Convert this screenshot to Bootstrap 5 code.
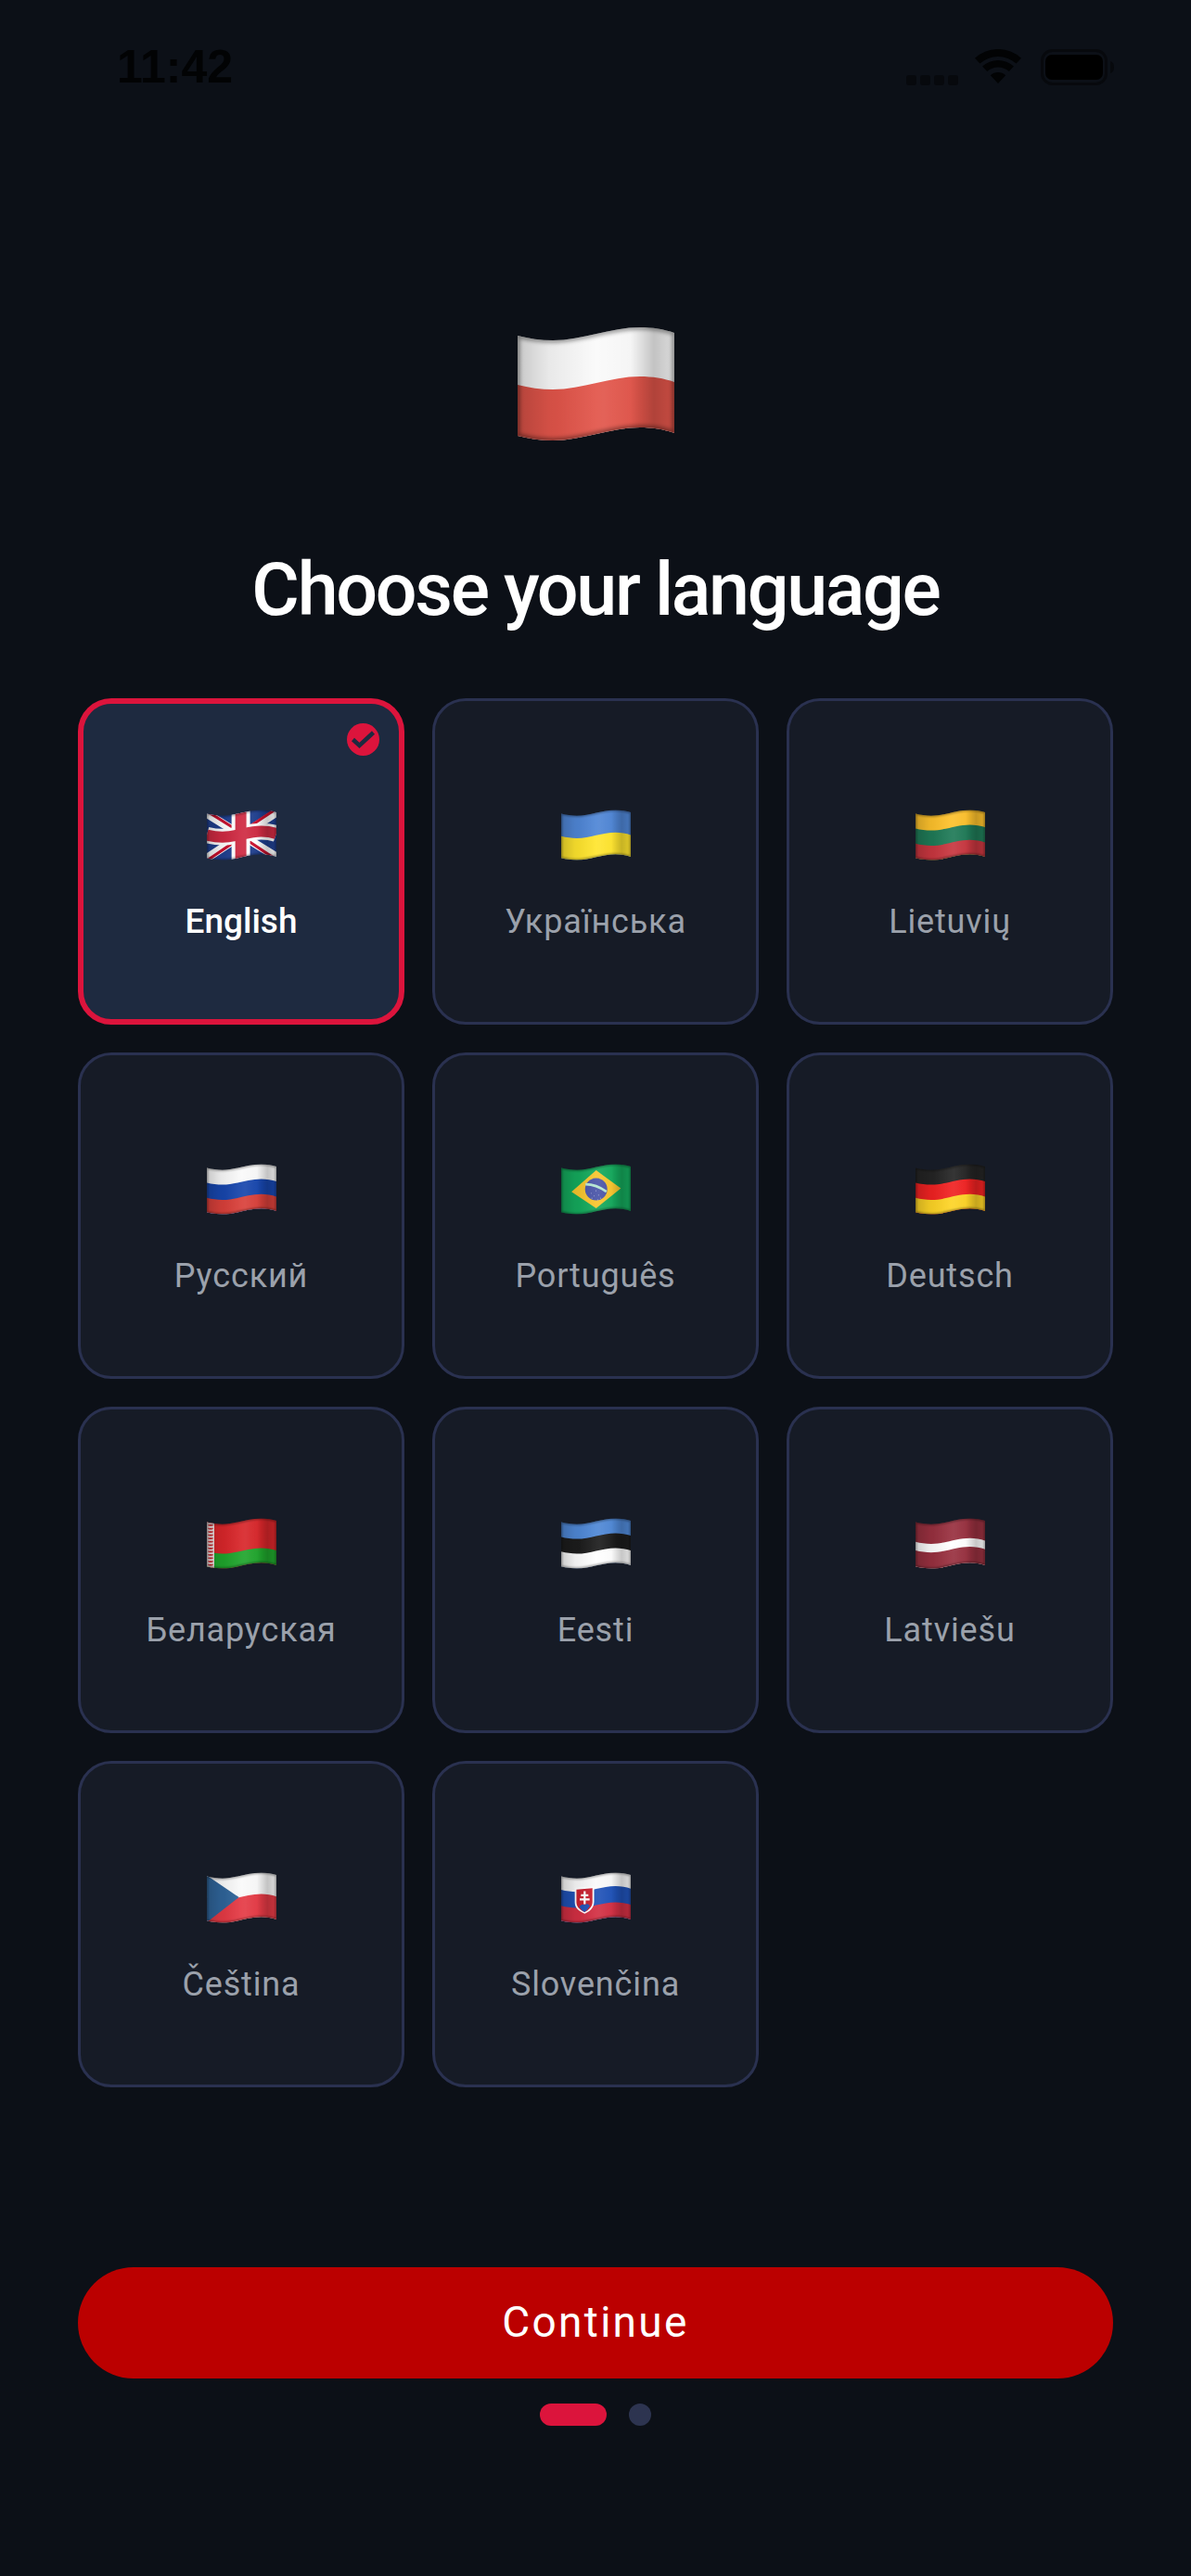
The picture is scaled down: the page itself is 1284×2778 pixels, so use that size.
<!DOCTYPE html>
<html lang="en">
<head>
  <meta charset="UTF-8" />
  <meta name="viewport" content="width=device-width, initial-scale=1" />
  <title>Choose your language</title>
  <link href="https://cdn.jsdelivr.net/npm/bootstrap@5.3.3/dist/css/bootstrap.min.css" rel="stylesheet" />
  <style>
    body { background: #0c1017; font-family: Roboto, "Liberation Sans", sans-serif; }
    .svg-defs { display: block; width: 0; height: 0; }
    .screen { min-height: 2778px; padding: 0 84px; }

    .status-row { height: 92px; padding-top: 53px; margin: 0 -2px 0 42px; }
    .clock { font: 700 50px/39px "Liberation Sans", sans-serif; color: #020304; }
    .sig-bar { width: 11px; height: 11px; background: #07090d; border-radius: 3px; }
    .wifi-ico { width: 50px; height: 37px; margin-left: 18px; }
    .batt-ico { width: 80px; height: 39px; margin-left: 21px; }

    .flag-big { width: 169px; height: 124px; margin-top: 260px; }
    .page-title { font-size: 79px; font-weight: 500; letter-spacing: -2.3px; line-height: 90px; color: #fff; margin: 115px 0 0; }

    .lang-grid { display: grid; grid-template-columns: repeat(3, 352px); gap: 30px; margin-top: 72px; }
    .lang-tile { height: 352px; background: #161b26; border: 3px solid #2a3150; border-radius: 36px; padding-top: 117px; }
    .lang-tile.picked { background: #1e2a40; border: 6px solid #dc143c; padding-top: 114px; }
    .flag-sm { width: 75px; height: 55px; }
    .lang-name { font-size: 36px; line-height: 44px; letter-spacing: .85px; color: #9ba1ab; margin-top: 44px; }
    .picked .lang-name { color: #fff; font-size: 37px; font-weight: 500; letter-spacing: 0; }
    .tick-badge { top: 21px; right: 21px; width: 35px; height: 35px; }

    .go-btn { height: 120px; margin-top: 194px; padding-bottom: 8px; background: #bb0000; color: #fff; font-size: 46px; letter-spacing: 2.3px; border: 0; }
    .go-btn:hover { background: #bb0000; color: #fff; }
    .pager { margin-top: 27px; gap: 24px; }
    .pager-on { width: 72px; height: 24px; background: #dc143c; }
    .pager-off { width: 24px; height: 24px; background: #2d3450; }
  </style>
</head>
<body>
  <!-- flags -->
  <svg class="svg-defs" aria-hidden="true">
    <defs>
      <clipPath id="wave-clip"><path d="M0 10C12 13 25 15 38 15C70 15 100 1 132 1C145 1 158 3 169 7V115C158 111 145 109 132 109C100 109 70 123 38 123C25 123 12 121 0 118Z" /></clipPath>
      <path id="wv" d="M0 10C12 13 25 15 38 15C70 15 100 1 132 1C145 1 158 3 169 7V150H0Z" />
      <linearGradient id="sheen-dark">
        <stop offset="0" stop-color="#000" stop-opacity=".2" />
        <stop offset=".2" stop-color="#000" stop-opacity=".07" />
        <stop offset=".5" stop-color="#000" stop-opacity="0" />
        <stop offset=".72" stop-color="#000" stop-opacity=".02" />
        <stop offset=".87" stop-color="#000" stop-opacity=".22" />
        <stop offset="1" stop-color="#000" stop-opacity=".12" />
      </linearGradient>
      <linearGradient id="sheen-light">
        <stop offset=".25" stop-color="#fff" stop-opacity="0" />
        <stop offset=".55" stop-color="#fff" stop-opacity=".08" />
        <stop offset=".8" stop-color="#fff" stop-opacity="0" />
      </linearGradient>
      <filter id="soft" x="-10%" y="-10%" width="120%" height="120%"><feGaussianBlur stdDeviation="2" /></filter>
      <g id="shade">
        <rect width="169" height="124" fill="url(#sheen-light)" />
        <rect width="169" height="124" fill="url(#sheen-dark)" />
        <path d="M0 10C12 13 25 15 38 15C70 15 100 1 132 1C145 1 158 3 169 7V115C158 111 145 109 132 109C100 109 70 123 38 123C25 123 12 121 0 118Z" fill="none" stroke="#000" stroke-opacity=".4" stroke-width="5" filter="url(#soft)" />
      </g>

      <symbol id="fl-pl" viewBox="0 0 169 124"><g clip-path="url(#wave-clip)">
        <rect width="169" height="124" fill="#fafafa" /><use href="#wv" y="53" fill="#e2554a" /><use href="#shade" />
      </g></symbol>

      <symbol id="fl-gb" viewBox="0 0 169 124"><g clip-path="url(#wave-clip)">
        <rect width="169" height="124" fill="#1f3f8f" />
        <path d="M0 10L169 115M169 7L0 118" stroke="#fff" stroke-width="20" fill="none" />
        <path d="M0 4L70 48M169 -2L100 44M0 124L68 78M169 122L100 76" stroke="#c8102e" stroke-width="7" fill="none" />
        <rect x="60" width="45" height="124" fill="#fff" />
        <path d="M0 62C12 65 25 67 38 67C70 67 100 53 132 53C145 53 158 55 169 59" fill="none" stroke="#fff" stroke-width="40" />
        <rect x="69" width="27" height="124" fill="#cf2a42" />
        <path d="M0 62C12 65 25 67 38 67C70 67 100 53 132 53C145 53 158 55 169 59" fill="none" stroke="#cf2a42" stroke-width="27" />
        <use href="#shade" />
      </g></symbol>

      <symbol id="fl-ua" viewBox="0 0 169 124"><g clip-path="url(#wave-clip)">
        <rect width="169" height="124" fill="#4f86d6" /><use href="#wv" y="55" fill="#ffe52e" /><use href="#shade" />
      </g></symbol>

      <symbol id="fl-lt" viewBox="0 0 169 124"><g clip-path="url(#wave-clip)">
        <rect width="169" height="124" fill="#fdc12c" /><use href="#wv" y="36" fill="#1f7a57" /><use href="#wv" y="73" fill="#c8363f" /><use href="#shade" />
      </g></symbol>

      <symbol id="fl-ru" viewBox="0 0 169 124"><g clip-path="url(#wave-clip)">
        <rect width="169" height="124" fill="#fafafa" /><use href="#wv" y="36" fill="#1746ad" /><use href="#wv" y="73" fill="#d9403a" /><use href="#shade" />
      </g></symbol>

      <symbol id="fl-br" viewBox="0 0 169 124"><g clip-path="url(#wave-clip)">
        <rect width="169" height="124" fill="#14a95c" />
        <path d="M85 16L145 60L85 108L25 68Z" fill="#f7c52e" />
        <circle cx="85" cy="62" r="27" fill="#4a55a8" />
        <path d="M59 50Q85 50 110 68" stroke="#b4e6d2" stroke-width="6" fill="none" />
        <path d="M72 72h1M80 78h1M90 76h1M96 84h1M84 66h1M74 84h1M88 88h1" stroke="#c7ccec" stroke-width="3" fill="none" />
        <use href="#shade" />
      </g></symbol>

      <symbol id="fl-de" viewBox="0 0 169 124"><g clip-path="url(#wave-clip)">
        <rect width="169" height="124" fill="#242424" /><use href="#wv" y="36" fill="#f02222" /><use href="#wv" y="73" fill="#fdd426" /><use href="#shade" />
      </g></symbol>

      <symbol id="fl-by" viewBox="0 0 169 124"><g clip-path="url(#wave-clip)">
        <rect width="169" height="124" fill="#d8262a" /><use href="#wv" y="72" fill="#1fa52c" />
        <rect width="18" height="124" fill="#f3e6e6" />
        <path d="M9 8V124" stroke="#c9252b" stroke-width="8" stroke-dasharray="4 4" />
        <path d="M4 8V124M14 8V124" stroke="#c9252b" stroke-width="2" stroke-dasharray="3 5" />
        <use href="#shade" />
      </g></symbol>

      <symbol id="fl-ee" viewBox="0 0 169 124"><g clip-path="url(#wave-clip)">
        <rect width="169" height="124" fill="#4f88d6" /><use href="#wv" y="36" fill="#1c1c1c" /><use href="#wv" y="72" fill="#fff" /><use href="#shade" />
      </g></symbol>

      <symbol id="fl-lv" viewBox="0 0 169 124"><g clip-path="url(#wave-clip)">
        <rect width="169" height="124" fill="#98303f" /><use href="#wv" y="48" fill="#fff" /><use href="#wv" y="69" fill="#98303f" /><use href="#shade" />
      </g></symbol>

      <symbol id="fl-cz" viewBox="0 0 169 124"><g clip-path="url(#wave-clip)">
        <rect width="169" height="124" fill="#fafafa" /><use href="#wv" y="52" fill="#e53a45" />
        <path d="M0 8L78 61L0 122Z" fill="#2f6499" /><use href="#shade" />
      </g></symbol>

      <symbol id="fl-sk" viewBox="0 0 169 124"><g clip-path="url(#wave-clip)">
        <rect width="169" height="124" fill="#fafafa" /><use href="#wv" y="33" fill="#1f52b8" /><use href="#wv" y="72" fill="#d32f43" />
        <path d="M33 38L80 35V72C80 88 66 97 57 101C48 97 33 90 33 74Z" fill="#fff" />
        <path d="M37 42L76 39V72C76 85 65 93 57 97C49 93 37 86 37 73Z" fill="#c9202f" />
        <path d="M44 84Q50 75 57 80Q64 74 70 82Q64 92 57 97Q49 93 44 84Z" fill="#1f52b8" />
        <path d="M57 46V78M48 56H66M45 66H69" stroke="#fff" stroke-width="5" fill="none" />
        <use href="#shade" />
      </g></symbol>
    </defs>
  </svg>

  <div class="screen d-flex flex-column">
    <div class="status-row d-flex align-items-start">
      <span class="clock">11:42</span>
      <div class="d-flex gap-1 ms-auto align-self-end">
        <span class="sig-bar"></span><span class="sig-bar"></span><span class="sig-bar"></span><span class="sig-bar"></span>
      </div>
      <svg class="wifi-ico" viewBox="0 0 50 37" fill="#020304">
        <path d="M0 9.7A37 37 0 0 1 50 9.7L44.6 15.6A29 29 0 0 0 5.4 15.6Z" />
        <path d="M8.1 18.6A25 25 0 0 1 41.9 18.6L36.8 24.1A17.5 17.5 0 0 0 13.2 24.1Z" />
        <path d="M16.9 28.2A12 12 0 0 1 33.1 28.2L25 37Z" />
      </svg>
      <svg class="batt-ico" viewBox="0 0 80 39">
        <rect x="1.5" y="1.5" width="69" height="36" rx="11" fill="none" stroke="#07090d" stroke-width="3" />
        <rect x="5" y="6" width="62" height="27" rx="7" fill="#000" />
        <path d="M75 13C78 14 79 16 79 19.5S78 25 75 26Z" fill="#07090d" />
      </svg>
    </div>

    <svg class="flag-big align-self-center"><use href="#fl-pl" /></svg>
    <h1 class="page-title text-center">Choose your language</h1>

    <div class="lang-grid">
      <div class="lang-tile picked position-relative d-flex flex-column align-items-center">
        <svg class="tick-badge position-absolute" viewBox="0 0 35 35">
          <circle cx="17.5" cy="17.5" r="17.5" fill="#dc143c" />
          <path d="M6.5 17.5L13.5 24L28.5 10" fill="none" stroke="#1e2a40" stroke-width="4.5" />
        </svg>
        <svg class="flag-sm"><use href="#fl-gb" /></svg>
        <span class="lang-name">English</span>
      </div>
      <div class="lang-tile d-flex flex-column align-items-center">
        <svg class="flag-sm"><use href="#fl-ua" /></svg>
        <span class="lang-name">Українська</span>
      </div>
      <div class="lang-tile d-flex flex-column align-items-center">
        <svg class="flag-sm"><use href="#fl-lt" /></svg>
        <span class="lang-name">Lietuvių</span>
      </div>
      <div class="lang-tile d-flex flex-column align-items-center">
        <svg class="flag-sm"><use href="#fl-ru" /></svg>
        <span class="lang-name">Русский</span>
      </div>
      <div class="lang-tile d-flex flex-column align-items-center">
        <svg class="flag-sm"><use href="#fl-br" /></svg>
        <span class="lang-name">Português</span>
      </div>
      <div class="lang-tile d-flex flex-column align-items-center">
        <svg class="flag-sm"><use href="#fl-de" /></svg>
        <span class="lang-name">Deutsch</span>
      </div>
      <div class="lang-tile d-flex flex-column align-items-center">
        <svg class="flag-sm"><use href="#fl-by" /></svg>
        <span class="lang-name">Беларуская</span>
      </div>
      <div class="lang-tile d-flex flex-column align-items-center">
        <svg class="flag-sm"><use href="#fl-ee" /></svg>
        <span class="lang-name">Eesti</span>
      </div>
      <div class="lang-tile d-flex flex-column align-items-center">
        <svg class="flag-sm"><use href="#fl-lv" /></svg>
        <span class="lang-name">Latviešu</span>
      </div>
      <div class="lang-tile d-flex flex-column align-items-center">
        <svg class="flag-sm"><use href="#fl-cz" /></svg>
        <span class="lang-name">Čeština</span>
      </div>
      <div class="lang-tile d-flex flex-column align-items-center">
        <svg class="flag-sm"><use href="#fl-sk" /></svg>
        <span class="lang-name">Slovenčina</span>
      </div>
    </div>

    <button type="button" class="btn go-btn w-100 rounded-pill">Continue</button>
    <div class="pager d-flex justify-content-center">
      <span class="pager-on rounded-pill"></span>
      <span class="pager-off rounded-circle"></span>
    </div>
  </div>

  <script src="https://cdn.jsdelivr.net/npm/bootstrap@5.3.3/dist/js/bootstrap.bundle.min.js"></script>
</body>
</html>
